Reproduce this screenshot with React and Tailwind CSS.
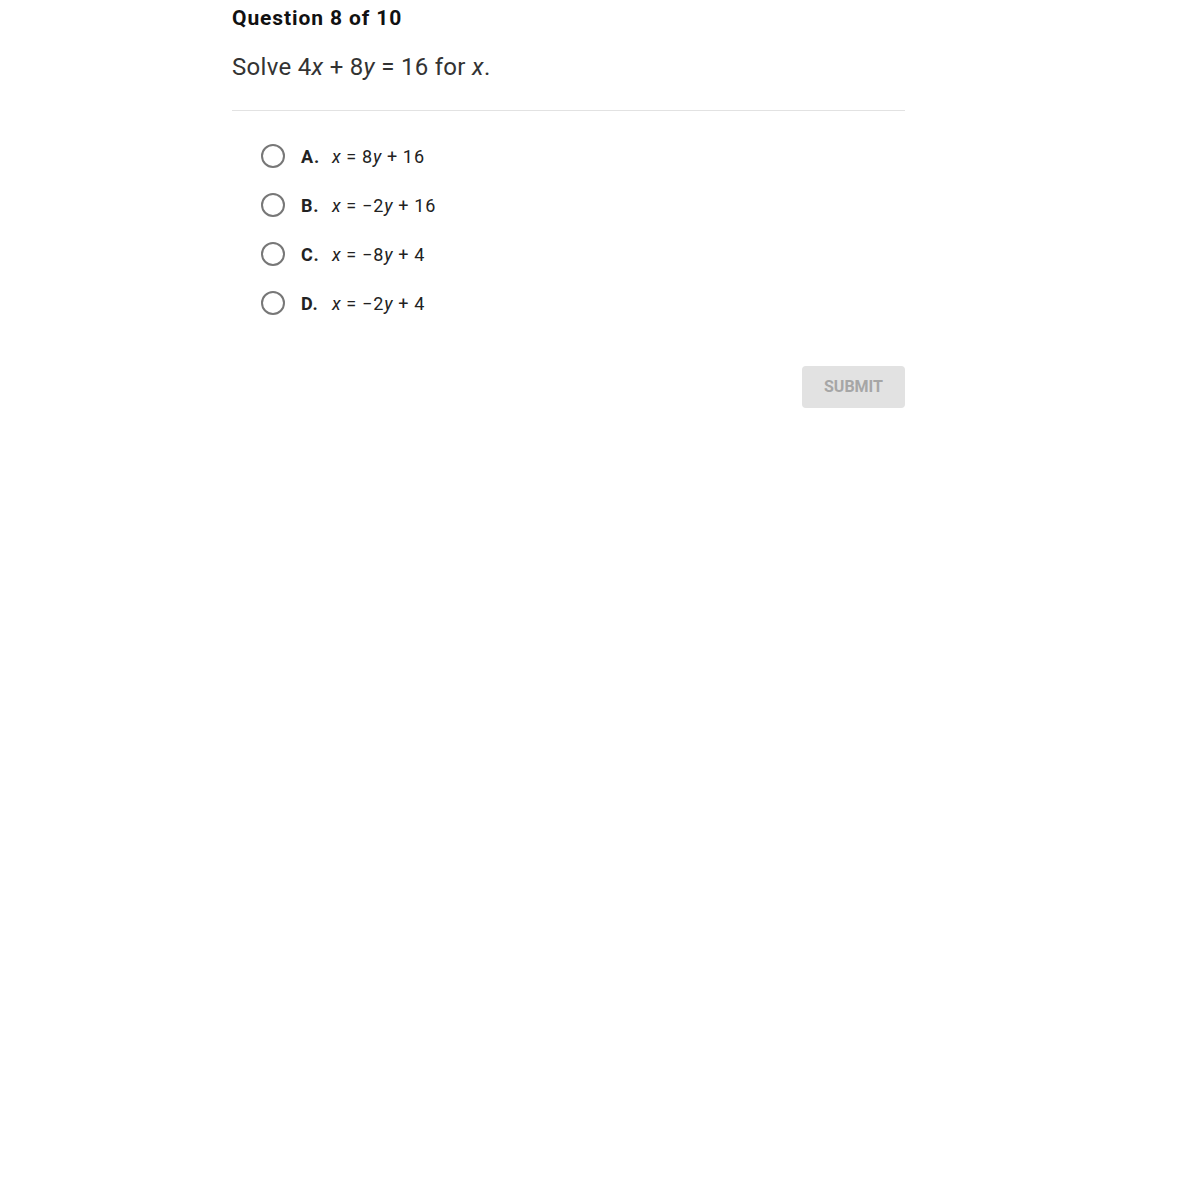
export default function App() {
  const opts = [
    { l: "A.", eq: <><i>x</i>&#8201;=&#8201;8<i>y</i>&#8201;+&#8201;16</> },
    { l: "B.", eq: <><i>x</i>&#8201;=&#8201;−2<i>y</i>&#8201;+&#8201;16</> },
    { l: "C.", eq: <><i>x</i>&#8201;=&#8201;−8<i>y</i>&#8201;+&#8201;4</> },
    { l: "D.", eq: <><i>x</i>&#8201;=&#8201;−2<i>y</i>&#8201;+&#8201;4</> },
  ];
  return (
    <div className="w-[1199px] h-[1200px] bg-white" style={{ fontFamily: "Roboto, 'Liberation Sans', sans-serif" }}>
      <div className="ml-[232px] w-[673px] pt-[5px]">
        <div className="text-[21px] font-bold text-[#111] leading-[26px] tracking-[0.9px]">Question 8 of 10</div>
        <div className="mt-[21px] text-[24px] text-[#333] leading-[30px] tracking-[0.3px]">
          Solve 4<i>x</i> + 8<i>y</i> = 16 for <i>x</i>.
        </div>
        <div className="mt-[28px] h-px bg-[#e2e2e2]" />
        <div className="mt-[33px] pl-[29px] flex flex-col gap-[25px]">
          {opts.map((o) => (
            <div key={o.l} className="flex items-center h-[24px]">
              <div className="w-[24px] h-[24px] rounded-full border-2 border-[#777]" />
              <span className="ml-[16px] w-[31px] text-[18px] font-bold text-[#222] tracking-[0.8px]">{o.l}</span>
              <span className="text-[18px] text-[#222] tracking-[1px]">{o.eq}</span>
            </div>
          ))}
        </div>
        <div className="mt-[51px] flex justify-end">
          <div className="w-[103px] h-[42px] rounded-[4px] bg-[#e2e2e2] flex items-center justify-center text-[16px] font-bold text-[#a6a6a6]">
            SUBMIT
          </div>
        </div>
      </div>
    </div>
  );
}
